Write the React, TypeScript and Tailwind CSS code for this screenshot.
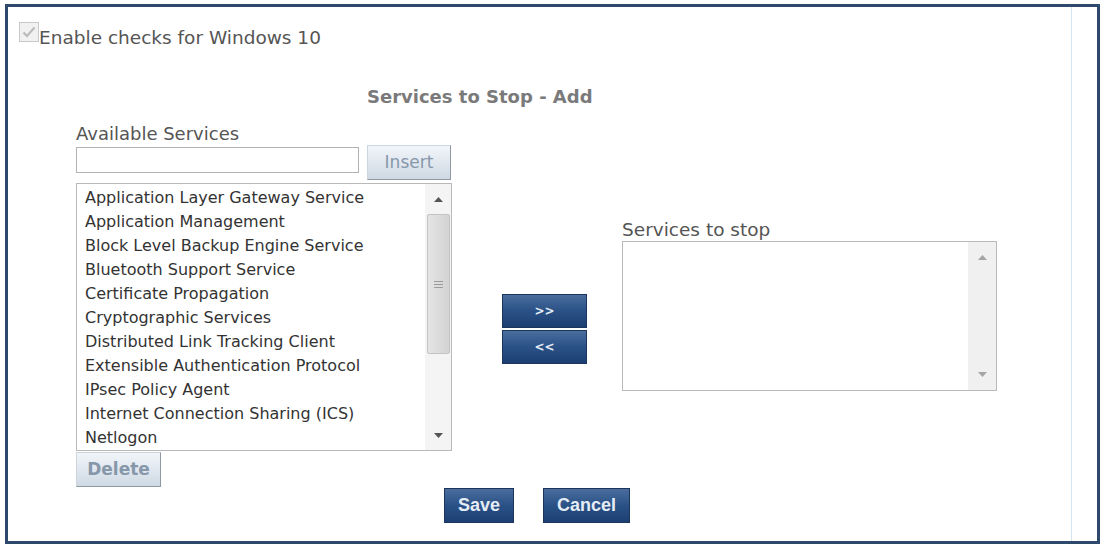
import React from 'react';

const services = [
  'Application Layer Gateway Service',
  'Application Management',
  'Block Level Backup Engine Service',
  'Bluetooth Support Service',
  'Certificate Propagation',
  'Cryptographic Services',
  'Distributed Link Tracking Client',
  'Extensible Authentication Protocol',
  'IPsec Policy Agent',
  'Internet Connection Sharing (ICS)',
  'Netlogon',
];

const ArrowUp = ({ className }: { className: string }) => (
  <svg width="9" height="5" viewBox="0 0 9 5" className={className}>
    <path d="M0 5 L4.5 0 L9 5 Z" fill="currentColor" />
  </svg>
);

const ArrowDown = ({ className }: { className: string }) => (
  <svg width="9" height="5" viewBox="0 0 9 5" className={className}>
    <path d="M0 0 L4.5 5 L9 0 Z" fill="currentColor" />
  </svg>
);

const BlueButton = ({ label, w, h, text }: { label: string; w: string; h: string; text: string }) => (
  <button
    className={`${w} ${h} ${text} flex items-center justify-center border border-[#1c355c] bg-linear-to-b from-[#4a6d9d] via-[#2a5186] to-[#1d3f73] text-[#e4ecf5] font-bold`}
  >
    {label}
  </button>
);

const LightButton = ({ label, w, bold }: { label: string; w: string; bold?: boolean }) => (
  <button
    className={`${w} h-[35px] flex items-center justify-center border border-[#cdd5de] border-r-[#8f99a4] border-b-[#8f99a4] bg-linear-to-b from-[#f1f5f9] to-[#cfd9e4] text-[#8797aa] text-[17px] ${bold ? 'font-bold' : ''}`}
  >
    {label}
  </button>
);

export default function App() {
  return (
    <div className="w-[1106px] h-[548px] bg-white overflow-hidden pt-[4px] pl-[5px] font-['DejaVu_Sans',sans-serif]">
      <div className="w-[1095px] h-[540px] border-[3px] border-[#2d4a6c] flex">
        {/* form area */}
        <div className="w-[1064px] h-full border-r border-[#d6e3f0] flex flex-col">
          {/* enable checkbox */}
          <div className="mt-[15px] pl-[11px] h-[26px] flex items-start">
            <div className="w-[20px] h-[20px] border border-[#c9c9c9] bg-[#f1f1f1] flex items-center justify-center">
              <svg width="14" height="12" viewBox="0 0 14 12">
                <path d="M1.5 6.5 L5 10 L12.5 1.5" fill="none" stroke="#b9b9b9" strokeWidth="2" />
              </svg>
            </div>
            <span className="mt-[6px] text-[18.5px] leading-[20px] text-[#555]">Enable checks for Windows 10</span>
          </div>

          <div className="mt-[39px] pl-[359px] text-[18px] leading-[20px] font-bold text-[#7a7a7a]">
            Services to Stop - Add
          </div>

          <div className="mt-[17px] pl-[68px] flex">
            {/* available services */}
            <div className="w-[376px] flex flex-col">
              <div className="text-[18px] leading-[20px] text-[#555]">Available Services</div>
              <div className="mt-[1px] h-[35px] flex items-start">
                <input className="mt-[2px] w-[283px] h-[26px] border border-[#b3b3b3] bg-white outline-none" />
                <div className="ml-[8px]">
                  <LightButton label="Insert" w="w-[84px]" />
                </div>
              </div>
              <div className="mt-[3px] h-[268px] border border-[#b9b9b9] flex bg-white">
                <ul className="flex-1 pl-[8px] pt-[2px]">
                  {services.map((s) => (
                    <li key={s} className="h-[24px] leading-[24px] text-[16px] text-[#333] whitespace-nowrap">
                      {s}
                    </li>
                  ))}
                </ul>
                <div className="w-[26px] bg-[#f4f4f4] flex flex-col items-center">
                  <div className="h-[30px] flex items-center">
                    <ArrowUp className="text-[#555]" />
                  </div>
                  <div className="w-[23px] h-[140px] rounded-[2px] border border-[#c4c4c4] bg-linear-to-r from-[#e4e4e4] to-[#d3d3d3] flex flex-col items-center justify-center gap-[2px]">
                    <div className="w-[9px] h-[1px] bg-[#9b9b9b]" />
                    <div className="w-[9px] h-[1px] bg-[#9b9b9b]" />
                    <div className="w-[9px] h-[1px] bg-[#9b9b9b]" />
                  </div>
                  <div className="flex-1 flex items-end pb-[12px]">
                    <ArrowDown className="text-[#555]" />
                  </div>
                </div>
              </div>
              <div className="mt-[1px]">
                <LightButton label="Delete" w="w-[85px]" bold />
              </div>
            </div>

            {/* move buttons */}
            <div className="ml-[50px] w-[85px] pt-[170px] flex flex-col gap-[2px]">
              <BlueButton label=">>" w="w-[85px]" h="h-[34px]" text="text-[12px]" />
              <BlueButton label="<<" w="w-[85px]" h="h-[34px]" text="text-[12px]" />
            </div>

            {/* services to stop */}
            <div className="ml-[35px] w-[375px] pt-[96px] flex flex-col">
              <div className="text-[18.5px] leading-[20px] text-[#555]">Services to stop</div>
              <div className="mt-[1px] h-[150px] border border-[#b9b9b9] flex bg-white">
                <div className="flex-1" />
                <div className="w-[28px] bg-[#f0f0f0] flex flex-col items-center justify-between py-[13px]">
                  <ArrowUp className="text-[#a5a5a5]" />
                  <ArrowDown className="text-[#a5a5a5]" />
                </div>
              </div>
            </div>
          </div>

          <div className="mt-[1px] pl-[436px] flex gap-[29px] font-['Liberation_Sans',sans-serif]">
            <BlueButton label="Save" w="w-[70px]" h="h-[35px]" text="text-[18px]" />
            <BlueButton label="Cancel" w="w-[87px]" h="h-[35px]" text="text-[18px]" />
          </div>
        </div>
        <div className="flex-1" />
      </div>
    </div>
  );
}
